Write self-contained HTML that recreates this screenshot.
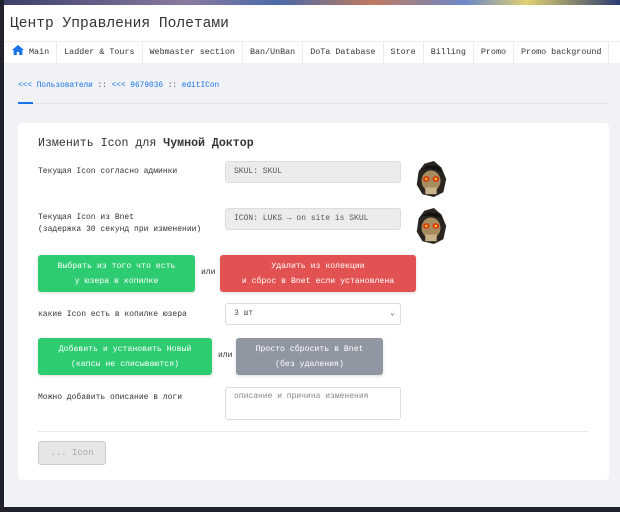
<!DOCTYPE html>
<html><head><meta charset="utf-8"><style>
*{box-sizing:border-box;margin:0;padding:0}
body{width:620px;height:512px;overflow:hidden;background:#f1f2f6;font-family:"Liberation Mono","Noto Sans CJK SC",monospace;position:relative;color:#333}
.abs{position:absolute}
.banner{left:0;top:0;width:620px;height:5px;background:linear-gradient(90deg,#3a3f6a,#8a7aa0 30%,#4a6aa8 45%,#c07a60 60%,#6b88c8 75%,#e0d070 85%,#2a3a70)}
.lb{left:0;top:0;width:4px;height:512px;background:#20232c}
.bot{left:0;top:507px;width:620px;height:5px;background:#20232c}
.hdr{left:4px;top:5px;width:616px;height:37px;background:#fff;border-bottom:1px solid #ececec}
.hdr span{position:absolute;left:6px;top:11px;font-size:14.6px;color:#333}
.nav{left:4px;top:42px;width:616px;height:21px;background:#fff;display:flex}
.nav div{font-size:8.4px;line-height:21px;padding:0 7px;border-right:1px solid #ececec;color:#333;white-space:nowrap}
.bc{left:18px;top:82px;font-size:7.8px;color:#1a73e8}
.ul{left:18px;top:102px;width:15px;height:2px;background:#1a73e8}
.line{left:33px;top:103px;width:576px;height:1px;background:#e3e5ea}
.card{left:18px;top:123px;width:591px;height:357px;background:#fff;border-radius:4px}
.t{font-size:11.6px;color:#333;left:38px;top:137px}
.lab{font-size:8px;color:#333;line-height:12px}
.inp{border:1px solid #dcdcdc;border-radius:3px;background:#ececec;font-size:8px;color:#555;padding-left:8px;line-height:20px}
.btn{border-radius:3px;color:#fff;font-size:8.2px;text-align:center;line-height:15px;display:flex;align-items:center;justify-content:center;box-shadow:0 1px 3px rgba(0,0,0,.15)}
.or{font-size:8px;color:#333}
</style></head><body>
<div class="abs banner"></div>
<div class="abs hdr"><span>Центр Управления Полетами</span></div>
<div class="abs nav">
<div style="padding-left:8px"><svg width="12" height="10" viewBox="0 0 12 10" style="vertical-align:-1px"><path d="M6 0L0 5h1.6v5h3.2V7h2.4v3h3.2V5H12z" fill="#1a73e8"/></svg> Main</div>
<div>Ladder &amp; Tours</div><div>Webmaster section</div><div>Ban/UnBan</div><div>DoTa Database</div><div>Store</div><div>Billing</div><div>Promo</div><div>Promo background</div></div>
<div class="abs lb"></div>
<div class="abs bc">&lt;&lt;&lt; Пользователи <span style="color:#555">::</span> &lt;&lt;&lt; 9679036 <span style="color:#555">::</span> editICon</div>
<div class="abs ul"></div><div class="abs line"></div>
<div class="abs card"></div>
<div class="abs t">Изменить Icon для <b>Чумной Доктор</b></div>
<div class="abs lab" style="left:38px;top:166px">Текущая Icon согласно админки</div>
<div class="abs inp" style="left:225px;top:161px;width:176px;height:22px">SKUL: SKUL</div>
<div class="abs lab" style="left:38px;top:212px">Текущая Icon из Bnet<br>(задержка 30 секунд при изменении)</div>
<div class="abs inp" style="left:225px;top:208px;width:176px;height:22px">ICON: LUKS → on site is SKUL</div>
<svg class="abs" style="left:414px;top:160px" width="34" height="38" viewBox="0 0 34 40"><path d="M10 4L20 1 28 8 33 20 30 34 20 39 8 36 2 26 4 12z" fill="#2a2520"/><ellipse cx="17" cy="22" rx="10" ry="11" fill="#a88b5e"/><rect x="11" y="29" width="12" height="7" fill="#c8b38a"/><ellipse cx="12" cy="20" rx="3.5" ry="3" fill="#d83a10"/><ellipse cx="22" cy="20" rx="3.5" ry="3" fill="#d83a10"/><circle cx="12" cy="20" r="1.3" fill="#ffcc33"/><circle cx="22" cy="20" r="1.3" fill="#ffcc33"/><path d="M6 10L14 6 24 6 30 14 26 11 16 9z" fill="#111"/></svg>
<svg class="abs" style="left:414px;top:207px" width="34" height="38" viewBox="0 0 34 40"><path d="M10 4L20 1 28 8 33 20 30 34 20 39 8 36 2 26 4 12z" fill="#2a2520"/><ellipse cx="17" cy="22" rx="10" ry="11" fill="#a88b5e"/><rect x="11" y="29" width="12" height="7" fill="#c8b38a"/><ellipse cx="12" cy="20" rx="3.5" ry="3" fill="#d83a10"/><ellipse cx="22" cy="20" rx="3.5" ry="3" fill="#d83a10"/><circle cx="12" cy="20" r="1.3" fill="#ffcc33"/><circle cx="22" cy="20" r="1.3" fill="#ffcc33"/><path d="M6 10L14 6 24 6 30 14 26 11 16 9z" fill="#111"/></svg>
<div class="abs btn" style="left:38px;top:255px;width:157px;height:37px;background:#2ecc71">Выбрать из того что есть<br>у юзера в копилке</div>
<div class="abs or" style="left:201px;top:268px">или</div>
<div class="abs btn" style="left:220px;top:255px;width:196px;height:37px;background:#e35252">Удалить из колекции<br>и сброс в Bnet если установлена</div>
<div class="abs lab" style="left:38px;top:309px">какие Icon есть в копилке юзера</div>
<div class="abs inp" style="left:225px;top:303px;width:176px;height:22px;background:#fff">3 шт<span style="position:absolute;right:5px;top:0;font-size:8px">⌄</span></div>
<div class="abs btn" style="left:38px;top:338px;width:174px;height:37px;background:#2ecc71">Добавить и установить Новый<br>(капсы не списываются)</div>
<div class="abs or" style="left:218px;top:351px">или</div>
<div class="abs btn" style="left:236px;top:338px;width:147px;height:37px;background:#9097a2">Просто сбросить в Bnet<br>(без удаления)</div>
<div class="abs lab" style="left:38px;top:392px">Можно добавить описание в логи</div>
<div class="abs inp" style="left:225px;top:387px;width:176px;height:33px;background:#fff;color:#888;line-height:18px">описание и причина изменения</div>
<div class="abs" style="left:38px;top:431px;width:550px;height:1px;background:#e6e7eb"></div>
<div class="abs" style="left:38px;top:441px;width:68px;height:24px;background:#e6e6e6;border:1px solid #ccc;border-radius:3px;color:#aaa;font-size:9px;text-align:center;line-height:22px">... Icon</div>
<div class="abs bot"></div>
</body></html>
